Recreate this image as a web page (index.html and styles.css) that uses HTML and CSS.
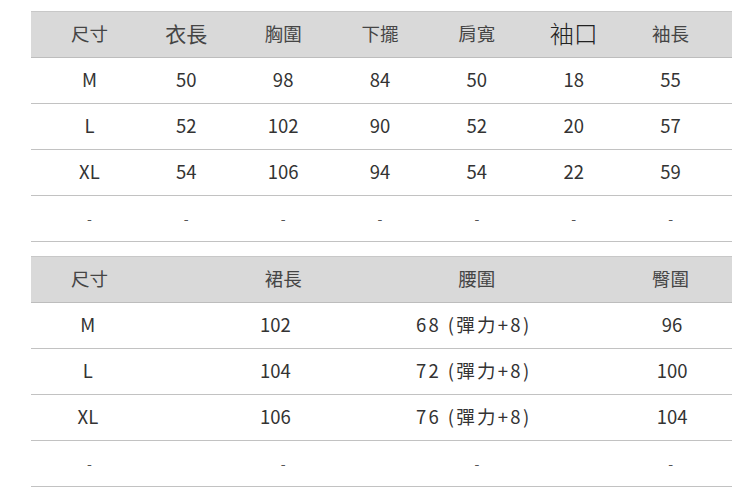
FILE: index.html
```html
<!DOCTYPE html>
<html lang="zh-Hant">
<head>
<meta charset="utf-8">
<title>尺寸表</title>
<link rel="stylesheet" href="styles.css">
</head>
<body>
<div class="page">
  <div class="table">
    <div class="row head">
      <div class="cell">尺寸</div>
      <div class="cell big">衣長</div>
      <div class="cell">胸圍</div>
      <div class="cell">下擺</div>
      <div class="cell">肩寬</div>
      <div class="cell huge">袖口</div>
      <div class="cell">袖長</div>
    </div>
    <div class="row">
      <div class="cell">M</div><div class="cell">50</div><div class="cell">98</div><div class="cell">84</div><div class="cell">50</div><div class="cell">18</div><div class="cell">55</div>
    </div>
    <div class="row">
      <div class="cell">L</div><div class="cell">52</div><div class="cell">102</div><div class="cell">90</div><div class="cell">52</div><div class="cell">20</div><div class="cell">57</div>
    </div>
    <div class="row">
      <div class="cell">XL</div><div class="cell">54</div><div class="cell">106</div><div class="cell">94</div><div class="cell">54</div><div class="cell">22</div><div class="cell">59</div>
    </div>
    <div class="row">
      <div class="cell dash">-</div><div class="cell dash">-</div><div class="cell dash">-</div><div class="cell dash">-</div><div class="cell dash">-</div><div class="cell dash">-</div><div class="cell dash">-</div>
    </div>
  </div>

  <div class="table">
    <div class="row head">
      <div class="cell c1">尺寸</div>
      <div class="cell c3">裙長</div>
      <div class="cell c5">腰圍</div>
      <div class="cell c7">臀圍</div>
    </div>
    <div class="row">
      <div class="cell c1">M</div><div class="cell c3">102</div><div class="cell c5 spaced">68 (彈力+8)</div><div class="cell c7">96</div>
    </div>
    <div class="row">
      <div class="cell c1">L</div><div class="cell c3">104</div><div class="cell c5 spaced">72 (彈力+8)</div><div class="cell c7">100</div>
    </div>
    <div class="row">
      <div class="cell c1">XL</div><div class="cell c3">106</div><div class="cell c5 spaced">76 (彈力+8)</div><div class="cell c7">104</div>
    </div>
    <div class="row">
      <div class="cell c1 dash">-</div><div class="cell c3 dash">-</div><div class="cell c5 dash">-</div><div class="cell c7 dash">-</div>
    </div>
  </div>
</div>
</body>
</html>
```

FILE: styles.css
```css
* { box-sizing: border-box; }
html, body { margin: 0; padding: 0; background: #ffffff; }
body {
  font-family: "Noto Sans CJK TC", "Noto Sans", sans-serif;
  color: #333333;
}
.page {
  padding: 11px 0 0 31px;
  width: 732px;
  display: flex;
  flex-direction: column;
  gap: 14px;
}
.table {
  display: flex;
  flex-direction: column;
}
.row {
  display: grid;
  grid-template-columns: repeat(7, 1fr);
  padding: 0 13px 2px 10px;
  height: 46px;
  border-bottom: 1px solid #c2c2c2;
  align-items: center;
  font-size: 18.5px;
  font-weight: 400;
  line-height: 1;
}
.row.head {
  height: 47px;
  padding-bottom: 3px;
  background: #d9d9d9;
  border-top: 1px solid #c8c8c8;
  border-bottom: 1px solid #bdbdbd;
  font-size: 18.5px;
  color: #454545;
}
.cell {
  text-align: center;
  white-space: nowrap;
}
.cell.big { font-size: 21px; }
.cell.huge { font-size: 24px; color: #222; font-weight: 300; }
.cell.dash { color: #555; font-size: 14px; }
.c1 { grid-column: 1; }
.c3 { grid-column: 3; }
.c5 { grid-column: 5; }
.c7 { grid-column: 7; }
.spaced { letter-spacing: 2.3px; }
```
